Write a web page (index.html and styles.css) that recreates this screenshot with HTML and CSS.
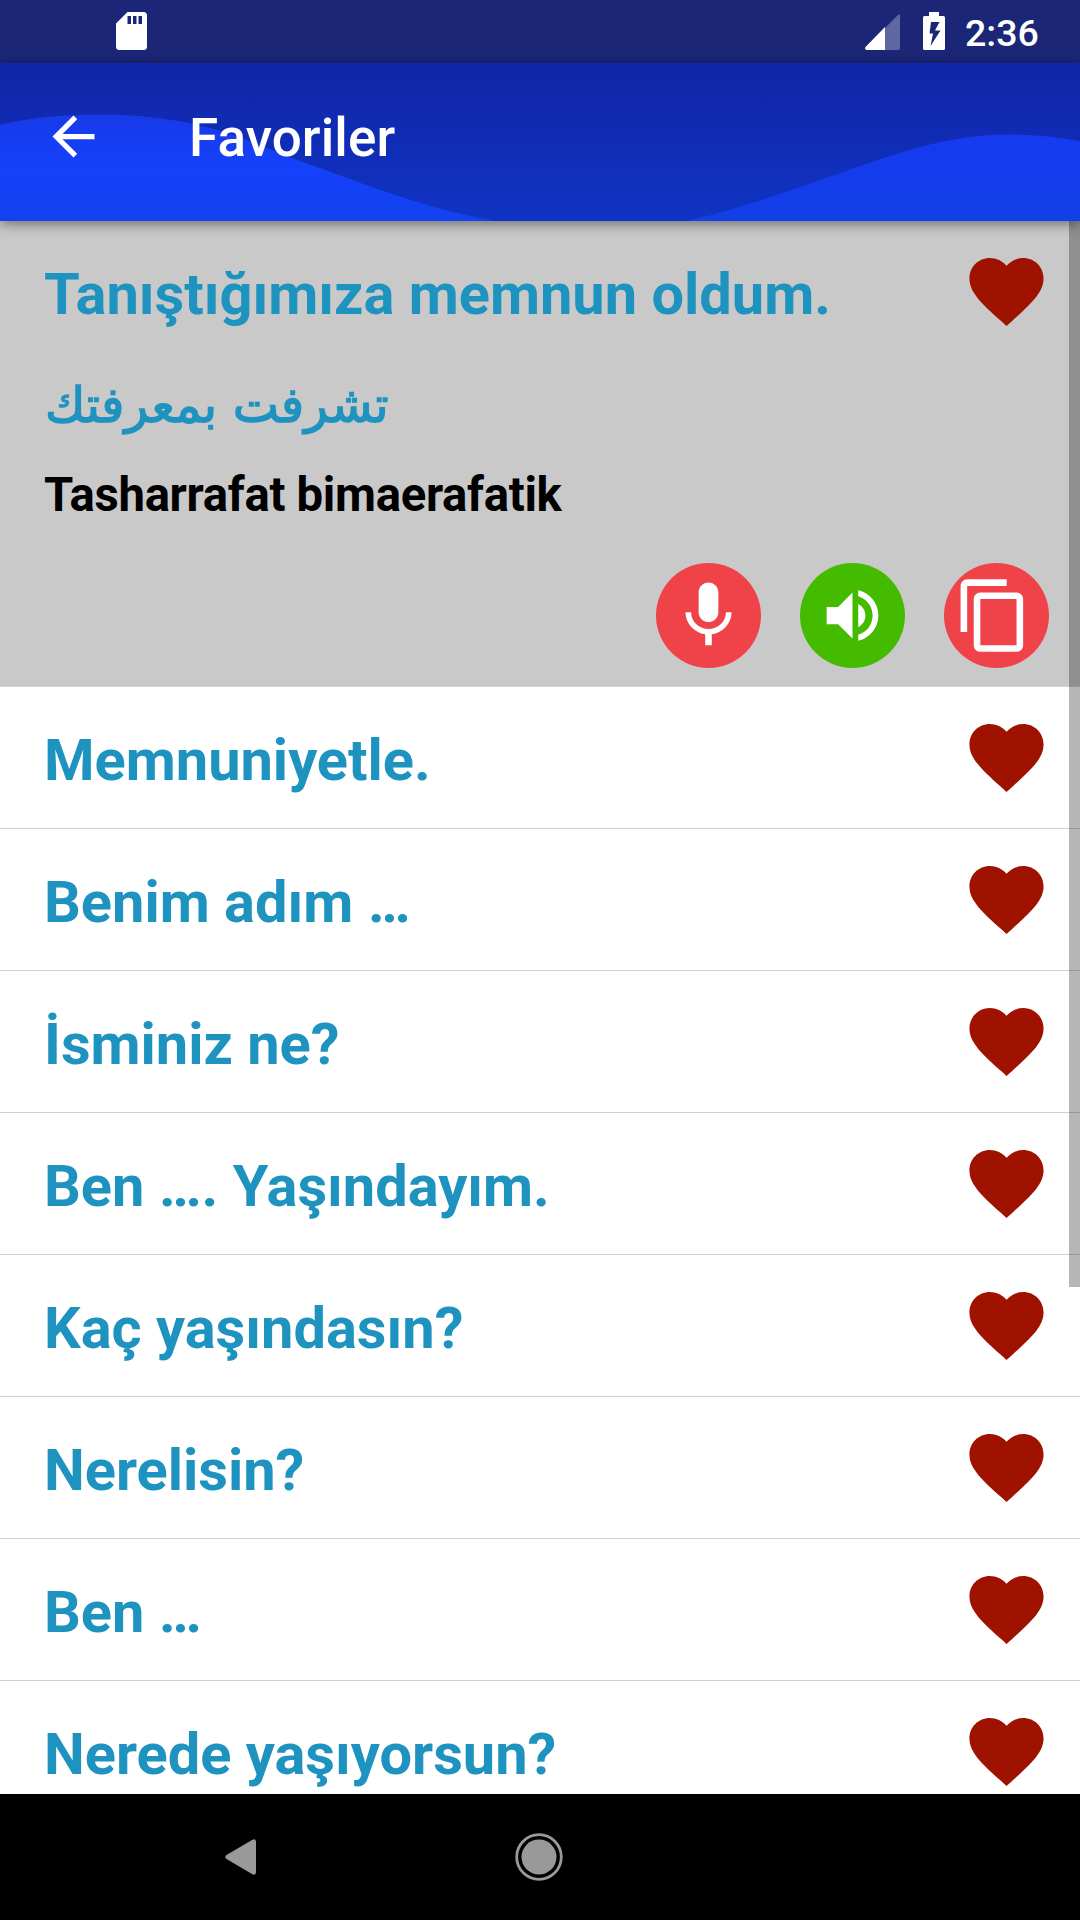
FILE: index.html
```
<!DOCTYPE html>
<html lang="tr">

<head>
    <meta charset="UTF-8" />
    <meta name="viewport" content="width=device-width, initial-scale=1.0" />
    <title>Favoriler</title>
    <link rel="stylesheet" href="styles.css">
</head>

<body>
    <svg class="symbols" width="0" height="0">
        <symbol id="heart" viewBox="2 3 20 18.35">
            <path d="M12 21.35l-1.45-1.32C5.4 15.36 2 12.28 2 8.5 2 5.42 4.42 3 7.5 3c1.74 0 3.41.81 4.5 2.09C13.09 3.81 14.76 3 16.5 3 19.58 3 22 5.42 22 8.5c0 3.78-3.4 6.86-8.55 11.54L12 21.35z" />
        </symbol>
    </svg>

    <div class="status-bar">
        <svg class="sd-card" viewBox="0 0 31 38">
            <path fill-rule="evenodd" d="M11.5 0H27.5a3.5 3.5 0 0 1 3.5 3.5V34.5a3.5 3.5 0 0 1-3.5 3.5H3.5a3.5 3.5 0 0 1-3.5-3.5V11.5zM11.5 4v8h3.5V4zM17 4v8h3.5V4zM22.5 4v8H26V4z" />
        </svg>
        <svg class="signal" viewBox="0 0 35 36">
            <path opacity=".3" d="M20 14L33 1q2-1.5 2 1V34q0 2-2 2H20z" />
            <path d="M20 13V36H2q-3-.5-1.5-3z" />
        </svg>
        <svg class="battery" viewBox="0 0 22 38">
            <path fill-rule="evenodd" d="M6 0H16V4H20.5Q22 4 22 5.5V36.5Q22 38 20.5 38H1.5Q0 38 0 36.5V5.5Q0 4 1.5 4H6zM8 10L6.5 21.5H10L7.5 34L17.5 18.5H12L16.5 10z" />
        </svg>
        <span class="clock">2:36</span>
    </div>

    <header class="toolbar">
        <svg class="waves" viewBox="0 0 1080 158" preserveAspectRatio="none">
            <defs>
                <linearGradient id="wave" x1="0" y1="52" x2="0" y2="158" gradientUnits="userSpaceOnUse">
                    <stop offset="0" stop-color="#183ae8" />
                    <stop offset=".5" stop-color="#1541fb" />
                    <stop offset="1" stop-color="#1242ee" />
                </linearGradient>
                <linearGradient id="wave2" x1="0" y1="72" x2="0" y2="158" gradientUnits="userSpaceOnUse">
                    <stop offset="0" stop-color="#173af0" />
                    <stop offset="1" stop-color="#123fe6" />
                </linearGradient>
            </defs>
            <path fill="url(#wave)" d="M0 62C55 48 145 47 210 65C250 76 275 89 300 98C365 121 420 144 494 158H0z" />
            <path fill="url(#wave2)" d="M686 158C760 142 840 108 900 90C970 68 1020 68 1080 78V158z" />
        </svg>
        <svg class="back" viewBox="0 0 24 24">
            <path d="M20 11H7.83l5.59-5.59L12 4l-8 8 8 8 1.41-1.41L7.83 13H20v-2z" />
        </svg>
        <h1>Favoriler</h1>
    </header>

    <main class="list">
        <div class="item open">
            <div class="row">
                <span class="phrase">Tanıştığımıza memnun oldum.</span>
                <svg class="heart"><use href="#heart" /></svg>
            </div>
            <div class="arabic" lang="ar">تشرفت بمعرفتك</div>
            <div class="reading">Tasharrafat bimaerafatik</div>
            <div class="actions">
                <button class="action mic">
                    <svg viewBox="0 0 24 24">
                        <path d="M12 14c1.66 0 2.99-1.34 2.99-3L15 5c0-1.66-1.34-3-3-3S9 3.34 9 5v6c0 1.66 1.34 3 3 3zm5.3-3c0 3-2.54 5.1-5.3 5.1S6.7 14 6.7 11H5c0 3.41 2.72 6.23 6 6.72V21h2v-3.28c3.28-.48 6-3.3 6-6.72h-1.7z" />
                    </svg>
                </button>
                <button class="action sound">
                    <svg viewBox="0 0 24 24">
                        <path d="M3 9v6h4l5 5V4L7 9H3zm13.5 3c0-1.77-1.02-3.29-2.5-4.03v8.05c1.48-.73 2.5-2.25 2.5-4.02zM14 3.23v2.06c2.89.86 5 3.54 5 6.71s-2.11 5.85-5 6.71v2.06c4.01-.91 7-4.49 7-8.77s-2.99-7.86-7-8.77z" />
                    </svg>
                </button>
                <button class="action copy">
                    <svg viewBox="0 0 24 24">
                        <path d="M16 1H4c-1.1 0-2 .9-2 2v14h2V3h12V1zm3 4H8c-1.1 0-2 .9-2 2v14c0 1.1.9 2 2 2h11c1.1 0 2-.9 2-2V7c0-1.1-.9-2-2-2zm0 16H8V7h11v14z" />
                    </svg>
                </button>
            </div>
        </div>
        <div class="item row">
            <span class="phrase">Memnuniyetle.</span>
            <svg class="heart"><use href="#heart" /></svg>
        </div>
        <div class="item row">
            <span class="phrase">Benim adım …</span>
            <svg class="heart"><use href="#heart" /></svg>
        </div>
        <div class="item row">
            <span class="phrase">İsminiz ne?</span>
            <svg class="heart"><use href="#heart" /></svg>
        </div>
        <div class="item row">
            <span class="phrase">Ben …. Yaşındayım.</span>
            <svg class="heart"><use href="#heart" /></svg>
        </div>
        <div class="item row">
            <span class="phrase">Kaç yaşındasın?</span>
            <svg class="heart"><use href="#heart" /></svg>
        </div>
        <div class="item row">
            <span class="phrase">Nerelisin?</span>
            <svg class="heart"><use href="#heart" /></svg>
        </div>
        <div class="item row">
            <span class="phrase">Ben …</span>
            <svg class="heart"><use href="#heart" /></svg>
        </div>
        <div class="item row">
            <span class="phrase">Nerede yaşıyorsun?</span>
            <svg class="heart"><use href="#heart" /></svg>
        </div>
        <div class="scrollbar"></div>
    </main>

    <nav class="nav-bar">
        <svg class="nav-back" viewBox="0 0 32 36">
            <path d="M1.5 16L27 1Q31 -1 31 3V33Q31 37 27 35L1.5 20Q-1 18 1.5 16z" />
        </svg>
        <svg class="nav-home" viewBox="0 0 48 48">
            <circle cx="24" cy="24" r="22.3" fill="none" stroke="#999" stroke-width="2.8" />
            <circle cx="24" cy="24" r="17.5" />
        </svg>
    </nav>
</body>

</html>
```
FILE: styles.css
```
* {
    box-sizing: border-box;
}

body {
    margin: 0;
    width: 1080px;
    height: 1920px;
    display: flex;
    flex-direction: column;
    overflow: hidden;
    background: #fff;
    font-family: Roboto, "Noto Sans", sans-serif;
}

.symbols {
    position: absolute;
}

/* status bar */
.status-bar {
    flex: none;
    height: 63px;
    display: flex;
    align-items: flex-start;
    padding: 12px 42px 0 116px;
    background: #1b2677;
    color: #fff;
    fill: #fff;
}

.sd-card {
    width: 31px;
    height: 38px;
}

.signal {
    width: 35px;
    height: 36px;
    margin: 2px 23px 0 auto;
}

.battery {
    width: 22px;
    height: 38px;
    margin-right: 20px;
}

.clock {
    width: 73px;
    font-size: 37.5px;
    font-weight: 500;
    line-height: 43px;
    white-space: nowrap;
}

/* toolbar */
.toolbar {
    position: relative;
    z-index: 1;
    flex: none;
    height: 158px;
    display: flex;
    align-items: center;
    padding: 0 42px;
    background: linear-gradient(#1025a7, #1034c4);
    box-shadow: 0 3px 12px rgba(0, 0, 0, 0.45);
}

.waves {
    position: absolute;
    top: 0;
    left: 0;
    width: 1080px;
    height: 158px;
}

.back {
    position: relative;
    width: 63px;
    height: 63px;
    margin-top: -11px;
    fill: #fff;
}

.toolbar h1 {
    position: relative;
    margin: -8px 0 0 84px;
    font-size: 53px;
    font-weight: 500;
    line-height: 62px;
    letter-spacing: 0.1px;
    color: #fff;
}

/* phrase list */
.list {
    position: relative;
    flex: 1;
    min-height: 0;
    overflow: hidden;
}

.item {
    border-bottom: 1px solid #d2d2d2;
}

.row {
    display: flex;
    justify-content: space-between;
    align-items: flex-start;
    height: 142px;
    padding: 37px 36px 0 44px;
}

.phrase {
    font-size: 57.75px;
    font-weight: 700;
    line-height: 72px;
    color: #1f93c0;
    white-space: nowrap;
}

.heart {
    width: 75px;
    height: 68px;
    fill: #a01200;
}

.open {
    height: 466px;
    background: #c9c9c9;
    border-bottom-color: #d2d2d2;
}

.arabic {
    height: 80px;
    padding-left: 45px;
    font-family: "DejaVu Sans", sans-serif;
    font-size: 49px;
    line-height: 86px;
    color: #1f93c0;
    -webkit-text-stroke: 1.4px #1f93c0;
}

.reading {
    padding-left: 44px;
    margin-top: 24px;
    font-size: 47.25px;
    font-weight: 700;
    line-height: 56px;
    letter-spacing: -0.3px;
    color: #000;
}

.actions {
    display: flex;
    justify-content: flex-end;
    gap: 39px;
    margin-top: 40px;
    padding-right: 31px;
}

.action {
    display: flex;
    align-items: center;
    justify-content: center;
    width: 105px;
    height: 105px;
    padding: 0;
    border: none;
    border-radius: 50%;
    background: #f04349;
    fill: #fff;
}

.action svg {
    flex: none;
    width: 79px;
    height: 79px;
}

.sound {
    background: #45bb00;
}

.action.sound svg {
    width: 69px;
    height: 69px;
}

.copy svg {
    margin-right: 6px;
}

.scrollbar {
    position: absolute;
    top: 0;
    right: 0;
    width: 11px;
    height: 1066px;
    background: rgba(0, 0, 0, 0.285);
}

/* system navigation */
.nav-bar {
    flex: none;
    height: 126px;
    display: flex;
    align-items: center;
    padding-left: 225px;
    background: #000;
    fill: #999;
}

.nav-back {
    width: 32px;
    height: 36px;
}

.nav-home {
    width: 48px;
    height: 48px;
    margin-left: 258px;
}
```
